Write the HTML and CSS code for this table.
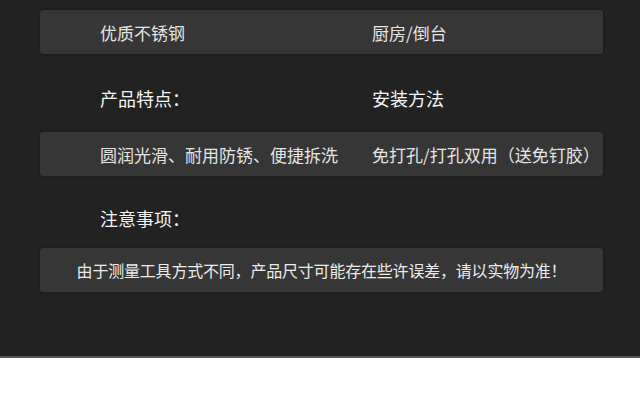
FILE: index.html
```html
<!DOCTYPE html>
<html lang="zh-CN">
<head>
  <meta charset="UTF-8">
  <meta name="viewport" content="width=device-width, initial-scale=1.0">
  <title>产品参数</title>
  <link rel="stylesheet" href="styles.css">
</head>
<body>
  <section class="params">
    <div class="box row">
      <span>优质不锈钢</span>
      <span>厨房/倒台</span>
    </div>
    <div class="title row first">
      <span>产品特点：</span>
      <span>安装方法</span>
    </div>
    <div class="box row">
      <span>圆润光滑、耐用防锈、便捷拆洗</span>
      <span>免打孔/打孔双用（送免钉胶）</span>
    </div>
    <div class="title row second">
      <span>注意事项：</span>
    </div>
    <div class="box notice">
      由于测量工具方式不同，产品尺寸可能存在些许误差，请以实物为准！
    </div>
  </section>
</body>
</html>
```

FILE: styles.css
```css
* {margin: 0; padding: 0; box-sizing: border-box;}

body {
  background-color: #fff;
  font-family: "Noto Sans CJK SC", "Noto Sans", sans-serif;
}

.params {
  background-color: #222;
  padding: 10px 0 64px;
  border-bottom: 2px solid #555;
  height: 358px;
}

/* 두 칸: 왼쪽 글자는 x=100, 오른쪽은 x=372 */
.row {
  display: grid;
  grid-template-columns: 272px 1fr;
  width: 563px;
  margin-left: 40px;
  padding-left: 60px;
}

.box {
  width: 563px;
  margin-left: 40px;
  height: 44px;
  background-color: #363636;
  border-radius: 3px;
  box-shadow: 0 0 2px rgba(0, 0, 0, 0.4);
  color: #e4e4e4;
  font-size: 17px;
  align-items: center;
}

.title {
  color: #f4f4f4;
  font-size: 18px;
  line-height: 24px;
}
.title.first {
  padding-top: 32px;
  padding-bottom: 22px;
}
.title.second {
  padding-top: 30px;
  padding-bottom: 18px;
}

.notice {
  display: flex;
  justify-content: center;
  font-size: 16px;
  letter-spacing: -0.2px;
  color: #ececec;
}
```
